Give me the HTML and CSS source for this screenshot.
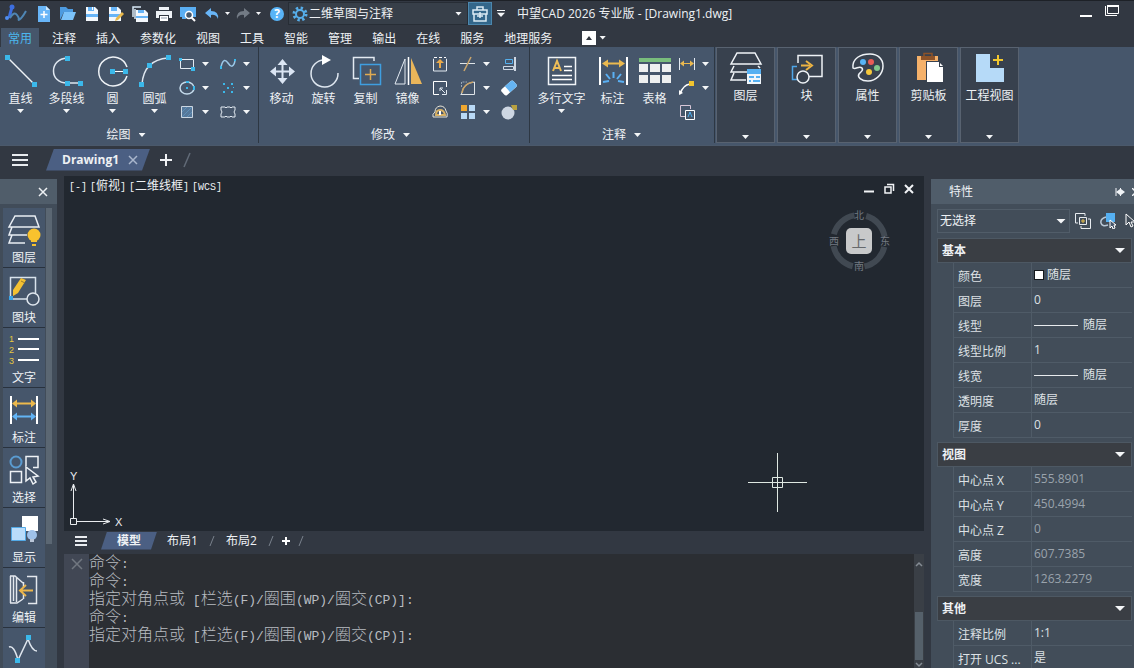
FILE: index.html
```html
<!DOCTYPE html>
<html lang="zh-CN">
<head>
    <meta charset="UTF-8">
    <meta name="viewport" content="width=device-width, initial-scale=1.0">
    <title>中望CAD 2026 专业版</title>
    <link rel="stylesheet" href="styles.css">
</head>
<body>
    <!-- 标题栏 -->
    <header class="titlebar">
        <svg class="logo" width="24" height="20" viewBox="0 0 24 20"><path d="M8 3L5 14" stroke="#3d6fe0" stroke-width="3" fill="none"/><circle cx="8" cy="3" r="2.5" fill="#3d6fe0"/><circle cx="3" cy="14" r="2" fill="#4f8df0"/><path d="M6 14q4-7 7-3t1 5q3 0 8-9" fill="none" stroke="#4f86b4" stroke-width="2"/></svg>
        <div class="quick">
            <button type="button" aria-label="新建"><svg width="16" height="16" viewBox="0 0 16 16"><path d="M2 0h8l4 4v12H2z" fill="#68b5f7"/><path d="M10 0v4h4z" fill="#cfe7fb"/><path d="M8 5v7M4.500 8.500h7" stroke="#fff" stroke-width="1.500"/></svg></button>
            <button type="button" aria-label="打开"><svg width="16" height="16" viewBox="0 0 16 16"><path d="M0 14V1h6l2 2h5v3H4z" fill="#4d9be0"/><path d="M4 6h12l-3 8H1z" fill="#7cc3fa"/></svg></button>
            <button type="button" aria-label="保存"><svg width="16" height="16" viewBox="0 0 16 16"><path d="M2 1h9l3 3v11H2z" fill="#f4f8fc"/><path d="M4 1h6v4H4zM2 8h12v3H2z" fill="#68b5f7"/><path d="M8 1h1v3H8z" fill="#fff"/></svg></button>
            <button type="button" aria-label="另存为"><svg width="16" height="16" viewBox="0 0 16 16"><path d="M1 1h9l3 3v11H1z" fill="#f4f8fc"/><path d="M3 1h6v4H3zM1 8h12v3H1z" fill="#68b5f7"/><path d="M14 6l2 2-6 6-3 1 1-3z" fill="#e8b84a"/></svg></button>
            <button type="button" aria-label="全部保存"><svg width="16" height="16" viewBox="0 0 16 16"><path d="M1 11V1h8M3 13V3" fill="none" stroke="#d8e8f6" stroke-width="1.500"/><path d="M4 4h9l3 3v9H4z" fill="#f4f8fc"/><path d="M6 4h6v3H6zM4 10h12v2H4z" fill="#68b5f7"/></svg></button>
            <button type="button" aria-label="打印"><svg width="16" height="16" viewBox="0 0 16 16"><path d="M3 1h10v3H3zM0 5h16v7h-3V9H3v3H0z" fill="#eef2f6"/><path d="M4 10h8v5H4z" fill="#fff"/><path d="M5 12h6" stroke="#8a97a8"/></svg></button>
            <button type="button" aria-label="打印预览"><svg width="16" height="16" viewBox="0 0 16 16"><path d="M0 1h16v10H0z" fill="#5aaef2"/><path d="M2 12h4" stroke="#5aaef2" stroke-width="2"/><circle cx="9" cy="9" r="3.500" fill="#46586b" stroke="#fff" stroke-width="1.500"/><path d="M11 11l4 4" stroke="#fff" stroke-width="2"/></svg></button>
            <button type="button" class="split" aria-label="撤销"><svg width="16" height="16" viewBox="0 0 16 16"><path d="M7 2L1 7l6 5V9q5-1 7 4 1-8-7-8z" fill="#68b5f7"/></svg><i class="caret tiny"></i></button>
            <button type="button" class="split dim" aria-label="重做"><svg width="16" height="16" viewBox="0 0 16 16"><path d="M9 2l6 5-6 5V9q-5-1-7 4-1-8 7-8z" fill="#737b85"/></svg><i class="caret tiny"></i></button>
            <button type="button" class="help" aria-label="帮助">?</button>
        </div>
        <label class="workspace">
            <svg width="16" height="16" viewBox="0 0 16 16"><circle cx="8" cy="8" r="6" fill="none" stroke="#56aeea" stroke-width="3" stroke-dasharray="2.300 2.400"/><circle cx="8" cy="8" r="4" fill="none" stroke="#56aeea" stroke-width="2"/></svg>
            <select aria-label="工作空间"><option>二维草图与注释</option></select>
            <i class="caret"></i>
        </label>
        <button type="button" class="toolbox" aria-label="工具箱"><svg width="16" height="16" viewBox="0 0 16 16"><path d="M1 4h14v4H1zM2 8v7h12V8M5 4V1h6v3" fill="none" stroke="#dcebf5" stroke-width="1.500"/><path d="M8 6v6M5 10h6" fill="none" stroke="#dcebf5" stroke-width="1.500"/></svg></button>
        <button type="button" class="custom" aria-label="自定义"><i class="caret"></i></button>
        <h1 class="app-title">中望CAD 2026 专业版 - [Drawing1.dwg]</h1>
        <div class="window-buttons">
            <button type="button" aria-label="最小化"><svg width="14" height="14" viewBox="0 0 14 14"><path d="M1 12h12" stroke="#fff" stroke-width="2"/></svg></button>
            <button type="button" aria-label="还原"><svg width="14" height="14" viewBox="0 0 14 14"><path d="M2.500 1.500h11v8h-11zM.500 2v9.500H12" fill="none" stroke="#fff"/><path d="M2 2h12" stroke="#fff" stroke-width="2"/></svg></button>
        </div>
    </header>

    <nav class="menu">
        <button type="button" class="active">常用</button>
        <button type="button">注释</button>
        <button type="button">插入</button>
        <button type="button">参数化</button>
        <button type="button">视图</button>
        <button type="button">工具</button>
        <button type="button">智能</button>
        <button type="button">管理</button>
        <button type="button">输出</button>
        <button type="button">在线</button>
        <button type="button">服务</button>
        <button type="button">地理服务</button>
        <button type="button" class="fold" aria-label="折叠功能区"><svg width="14" height="14" viewBox="0 0 14 14"><path d="M0 0h14v14H0z" fill="#fff"/><path d="M7 5l3 4H4z" fill="#30363f"/></svg><i class="caret"></i></button>
    </nav>

    <!-- 功能区 -->
    <section class="ribbon">
        <div class="group">
            <div class="group-body">
                <button type="button" class="tool"><svg width="34" height="34" viewBox="0 0 34 34"><path d="M4 4l26 26" stroke="#eef2f6" stroke-width="1.500"/><path d="M1 1h5v5H1zM28 28h5v5h-5z" fill="#3bb8ea"/></svg>直线<i class="caret"></i></button>
                <button type="button" class="tool wide"><svg width="34" height="34" viewBox="0 0 34 34"><path d="M17 4C-1 5-1 29 17 29h13" fill="none" stroke="#dfe7f0" stroke-width="1.500"/><path d="M15 2h5v5h-5zM15 27h5v5h-5zM28 27h5v5h-5z" fill="#3bb8ea"/></svg>多段线<i class="caret"></i></button>
                <button type="button" class="tool"><svg width="34" height="34" viewBox="0 0 34 34"><path d="M31 13A14.500 14.500 0 1 0 31 22" fill="none" stroke="#eef2f6" stroke-width="1.500"/><path d="M17 17.500h13" stroke="#fff"/><path d="M14 15h5v5h-5zM27 15h5v5h-5z" fill="#3bb8ea"/></svg>圆<i class="caret"></i></button>
                <button type="button" class="tool"><svg width="34" height="34" viewBox="0 0 34 34"><path d="M4 30Q6 6 30 4" fill="none" stroke="#dfe7f0" stroke-width="1.500"/><path d="M1 28h5v5H1zM9 9h5v5H9zM28 1h5v5h-5z" fill="#3bb8ea"/></svg>圆弧<i class="caret"></i></button>
                <div class="mini two">
                    <button type="button" aria-label="矩形"><svg width="18" height="18" viewBox="0 0 18 18"><path d="M2.500 4.500h13v9h-13z" fill="none" stroke="#e3eaf2"/><path d="M1 3h3v3H1zM13 12h4v4h-4z" fill="#3bb8ea"/></svg><i class="caret"></i></button>
                    <button type="button" aria-label="样条曲线"><svg width="18" height="18" viewBox="0 0 18 18"><path d="M2 12C4 3 7 5 9 8s5 6 7-2" fill="none" stroke="#9cc8e8" stroke-width="1.500"/><path d="M1 11h2v3H1zM15 4h2v2h-2z" fill="#3bb8ea"/></svg><i class="caret"></i></button>
                    <button type="button" aria-label="椭圆"><svg width="18" height="18" viewBox="0 0 18 18"><ellipse cx="9" cy="9" rx="7" ry="6" fill="none" stroke="#c5dced" stroke-width="1.500"/><path d="M8 2h3v2H8zM8 8h2v2H8zM15 7h2v4h-2z" fill="#3bb8ea"/></svg><i class="caret"></i></button>
                    <button type="button" aria-label="点"><svg width="18" height="18" viewBox="0 0 18 18"><path d="M4 4h2v2H4zM12 4h2v2h-2zM8 8h2v2H8zM4 12h2v2H4zM12 12h2v2h-2zM14 8h1v1h-1z" fill="#3bb8ea"/></svg><i class="caret"></i></button>
                    <button type="button" aria-label="填充"><svg width="18" height="18" viewBox="0 0 18 18"><path d="M3.500 3.500h11v11h-11z" fill="#56789a" stroke="#cbd6e2"/><path d="M4 9l5-5M4 14L14 4M9 14l5-5" stroke="#5f8fb8"/></svg><i class="caret"></i></button>
                    <button type="button" aria-label="修订云线"><svg width="18" height="18" viewBox="0 0 18 18"><path d="M3 4h3l1 1 1-1h3l1 1 1-1h3v3l-1 2 1 2v3h-3l-1-1-1 1H8l-1-1-1 1H2v-3l1-2-1-2V4z" fill="none" stroke="#e3eaf2" stroke-linejoin="round"/></svg><i class="caret"></i></button>
                </div>
            </div>
            <button type="button" class="group-title">绘图<i class="caret"></i></button>
        </div>

        <div class="group">
            <div class="group-body">
                <button type="button" class="tool"><svg width="34" height="34" viewBox="0 0 34 34"><path d="M17.500 8v19M8 17.500h19" stroke="#dbe5f3" stroke-width="2"/><path d="M17.500 5l5 6h-10zM17.500 30l5-6h-10zM5 17.500l6-5v10zM30 17.500l-6-5v10z" fill="#dbe5f3"/></svg>移动</button>
                <button type="button" class="tool"><svg width="34" height="34" viewBox="0 0 34 34"><path d="M17 6A13.500 13.500 0 1 0 31 19" fill="none" stroke="#dfe7f0" stroke-width="1.500"/><path d="M15 1l9 5-9 5z" fill="#fff"/></svg>旋转</button>
                <button type="button" class="tool"><svg width="34" height="34" viewBox="0 0 34 34"><path d="M25 7V3.500H4.500v21H10" fill="none" stroke="#e3eaf2" stroke-width="1.500"/><path d="M11.500 10.500h20v20h-20z" fill="none" stroke="#3f9ee0" stroke-width="1.500"/><path d="M21.500 15v11M16 20.500h11" stroke="#e0ab52" stroke-width="1.500"/></svg>复制</button>
                <button type="button" class="tool"><svg width="34" height="34" viewBox="0 0 34 34"><path d="M14 5v25H4z" fill="none" stroke="#e3eaf2"/><path d="M17.500 3v28" stroke="#fff" stroke-width="1.500"/><path d="M20 4l11 26H20z" fill="#e9b55a"/></svg>镜像</button>
                <div class="mini three">
                    <button type="button" aria-label="拉伸"><svg width="18" height="18" viewBox="0 0 18 18"><path d="M3 4H2.500v12h13V4H15" fill="none" stroke="#e3eaf2"/><path d="M3 2.500h12" stroke="#fff" stroke-dasharray="3 2"/><path d="M9 7v6" stroke="#e9a94a" stroke-width="2"/><path d="M9 4l4 4H5z" fill="#e9a94a"/></svg></button>
                    <button type="button" aria-label="修剪"><svg width="18" height="18" viewBox="0 0 18 18"><path d="M1 8.500h16" stroke="#dfe4e8" stroke-dasharray="7 1"/><path d="M12 2L5 16" stroke="#caa56c" stroke-width="1.500"/></svg><i class="caret"></i></button>
                    <button type="button" aria-label="对齐"><svg width="18" height="18" viewBox="0 0 18 18"><path d="M15 2v14" stroke="#cfd8e4" stroke-width="2"/><path d="M5.500 4.500h7v4h-7z" fill="none" stroke="#55b0ee"/><path d="M3.500 11.500h10v3h-10z" fill="none" stroke="#cfd8e4"/></svg></button>
                    <button type="button" aria-label="缩放"><svg width="18" height="18" viewBox="0 0 18 18"><path d="M15.500 8V2.500h-13v13H8" fill="none" stroke="#fff"/><path d="M9 9l5 5M9 12V9h3M15.500 11v4.500H11" fill="none" stroke="#e3eaf2"/></svg></button>
                    <button type="button" aria-label="圆角"><svg width="18" height="18" viewBox="0 0 18 18"><path d="M2.500 16V15Q4 4 15.500 3v12.500h-14" fill="none" stroke="#dfe4e8"/><path d="M3 14Q4 5 14 3" fill="none" stroke="#c9a368" stroke-width="1.500"/><path d="M2.500 8V3H8" fill="none" stroke="#9aa6b5" stroke-dasharray="2 1"/></svg><i class="caret"></i></button>
                    <button type="button" aria-label="删除"><svg width="18" height="18" viewBox="0 0 18 18"><g transform="rotate(-42 9 9)"><rect x="1" y="5" width="16" height="8" rx="2" fill="#fff"/><path d="M7 5h8q2 0 2 2v4q0 2-2 2H7z" fill="#65b4f2"/></g></svg></button>
                    <button type="button" aria-label="偏移"><svg width="18" height="18" viewBox="0 0 18 18"><path d="M2 14q-1-3 2-5 0-5 5-6 5 0 6 5 2 2 1 6z" fill="none" stroke="#e8e4d6"/><path d="M5 12q0-5 4-5t5 5z" fill="none" stroke="#d9b265" stroke-width="2"/><path d="M8 8h2v4H8z" fill="#fff"/></svg></button>
                    <button type="button" aria-label="阵列"><svg width="18" height="18" viewBox="0 0 18 18"><path d="M2 2h6v6H2z" fill="#f0a830"/><path d="M10 2h6v6h-6zM2 10h6v6H2zM10 10h6v6h-6z" fill="#b9d9f6"/></svg><i class="caret"></i></button>
                    <button type="button" aria-label="分解"><svg width="18" height="18" viewBox="0 0 18 18"><circle cx="8" cy="10" r="6.500" fill="#cdd6e2"/><path d="M11 2h6v5h-4z" fill="#b9a140"/></svg></button>
                </div>
            </div>
            <button type="button" class="group-title">修改<i class="caret"></i></button>
        </div>

        <div class="group last">
            <div class="group-body">
                <button type="button" class="tool widest"><svg width="34" height="34" viewBox="0 0 34 34"><path d="M3.500 3.500h27v27h-27z" fill="none" stroke="#f0f4f8" stroke-width="1.500"/><path d="M8 17l4-10 4 10M9 14h6" fill="none" stroke="#edbd58" stroke-width="2"/><path d="M19 12.500h8M19 16.500h8M7 21.500h20M7 25.500h20" stroke="#fff" stroke-width="1.500"/></svg>多行文字<i class="caret"></i></button>
                <button type="button" class="tool"><svg width="34" height="34" viewBox="0 0 34 34"><path d="M4 3v28M31 3v28" stroke="#fff" stroke-width="2"/><path d="M9 9.500h18" stroke="#ebb94f" stroke-width="2"/><path d="M6 9.500l6-4v8zM29 9.500l-6-4v8z" fill="#ebb94f"/><path d="M17.500 18v6M10 20l4 5M25 20l-4 5M7 28l6-1M28 28l-6-1" stroke="#5ab0f4" stroke-width="2"/></svg>标注</button>
                <button type="button" class="tool"><svg width="34" height="34" viewBox="0 0 34 34"><path d="M1 4h32v4H1z" fill="#79bd7c"/><path d="M1 10h9v8H1zM12 10h10v8H12zM24 10h9v8h-9zM1 21h9v8H1zM12 21h10v8H12zM24 21h9v8h-9z" fill="#eef0f0"/></svg>表格</button>
                <div class="mini one">
                    <button type="button" aria-label="线性标注"><svg width="18" height="18" viewBox="0 0 18 18"><path d="M1.500 3v12M16.500 3v12" stroke="#e3eaf2"/><path d="M4 8.500h10" stroke="#ebb94f"/><path d="M2 8.500l4-3v6zM16 8.500l-4-3v6z" fill="#ebb94f"/></svg><i class="caret"></i></button>
                    <button type="button" aria-label="引线"><svg width="18" height="18" viewBox="0 0 18 18"><path d="M2 15Q5 6 12 5" fill="none" stroke="#fff" stroke-width="1.500"/><path d="M1 16v-5l4 3z" fill="#fff"/><path d="M11 2h5v5h-5z" fill="#f2c42f"/></svg><i class="caret"></i></button>
                    <button type="button" aria-label="字段"><svg width="18" height="18" viewBox="0 0 18 18"><path d="M7 13.500H2.500v-11h10V6" fill="none" stroke="#d8c7d8"/><path d="M7.500 7.500h9v9h-9z" fill="none" stroke="#fff"/><path d="M10 14l2-5 2 5" fill="none" stroke="#4fb0f0"/></svg></button>
                </div>
            </div>
            <button type="button" class="group-title">注释<i class="caret"></i></button>
        </div>

        <div class="folded-groups">
            <button type="button" class="folded"><svg width="34" height="34" viewBox="0 0 34 34"><path d="M8 2h18l6 11H2zM5 15l-3 6h17M5 22l-3 7h15M29 15l2 2" fill="none" stroke="#f0f4f8" stroke-width="1.500"/><path d="M18 18h14v15H18z" fill="#f0f6fb"/><path d="M18 18h14v5H18zM20 25h5v2h-5zM27 25h4v2h-4zM20 29h2v2h-2zM24 29h7v2h-7z" fill="#55b0f2"/></svg>图层<i class="caret"></i></button>
            <button type="button" class="folded"><svg width="34" height="34" viewBox="0 0 34 34"><path d="M8 12V4.500h24v21H19" fill="none" stroke="#eef2f6" stroke-width="1.500"/><path d="M7 15.500H2.500v13H7" fill="none" stroke="#4ea6e8" stroke-width="1.500"/><circle cx="13" cy="26" r="6" fill="none" stroke="#eef2f6" stroke-width="1.500"/><path d="M11 14.500h9" stroke="#ecb343" stroke-width="2"/><path d="M16 10l6 4.500-6 4.500" fill="none" stroke="#ecb343" stroke-width="2"/></svg>块<i class="caret"></i></button>
            <button type="button" class="folded"><svg width="34" height="34" viewBox="0 0 34 34"><path d="M2 17C1 7 10 3 19 3c8 0 13 5 13 12 0 8-7 15-15 15-7 0-11-4-9-7s5-3 3-6c-3-3-6 2-9 0z" fill="none" stroke="#eef2f6" stroke-width="1.500"/><circle cx="12" cy="11" r="3" fill="#58b4f5"/><circle cx="20" cy="11" r="3" fill="#e85b56"/><circle cx="26" cy="17" r="3" fill="#7fc78b"/><circle cx="18" cy="21" r="3" fill="#f5c73b"/></svg>属性<i class="caret"></i></button>
            <button type="button" class="folded"><svg width="34" height="34" viewBox="0 0 34 34"><path d="M5 5h21v24H5z" fill="#f5b16a"/><path d="M9 5h14v4H9z" fill="#8d5329"/><path d="M12 2.500h8v4h-8z" fill="none" stroke="#8d5329" stroke-width="1.500"/><path d="M14 10h14l4 5v17H14z" fill="#38414e"/><path d="M15 11h12v5h4v15H15z" fill="#fff"/><path d="M28 12l3 3h-3z" fill="#fff"/></svg>剪贴板<i class="caret"></i></button>
            <button type="button" class="folded"><svg width="34" height="34" viewBox="0 0 34 34"><path d="M3 3h14v14h14v14H3z" fill="#b6daf8"/><path d="M25 4v10M20 9h10" stroke="#f2c72e" stroke-width="2"/></svg>工程视图<i class="caret"></i></button>
        </div>
    </section>

    <!-- 文档标签 -->
    <div class="doc-tabs">
        <button type="button" class="burger" aria-label="文档列表"><svg width="18" height="14" viewBox="0 0 18 14"><path d="M1 2h16M1 7h16M1 12h16" stroke="#e9ecf0" stroke-width="2"/></svg></button>
        <div class="doc-tab">
            <span>Drawing1</span>
            <button type="button" aria-label="关闭"><svg width="10" height="10" viewBox="0 0 10 10"><path d="M1 1l8 8M9 1L1 9" stroke="#a9b6cc" stroke-width="1.500"/></svg></button>
        </div>
        <button type="button" class="add" aria-label="新建图纸"><svg width="14" height="14" viewBox="0 0 14 14"><path d="M7 1v12M1 7h12" stroke="#f0f2f5" stroke-width="2"/></svg></button>
        <svg class="slash" width="8" height="16" viewBox="0 0 8 16"><path d="M7 1L1 15" stroke="#626b78" stroke-width="1.500"/></svg>
    </div>

    <main class="work">
        <aside class="palette">
            <div class="palette-head">
                <button type="button" aria-label="关闭工具栏"><svg width="10" height="10" viewBox="0 0 10 10"><path d="M1 1l8 8M9 1L1 9" stroke="#eef1f4" stroke-width="1.500"/></svg></button>
            </div>
            <div class="palette-body">
                <div class="palette-list">
                    <button type="button"><svg width="34" height="34" viewBox="0 0 34 34"><path d="M8 3h20l4 11H2zM5 14l-3 8h18M5 22l-3 8h16" fill="none" stroke="#e9eef4" stroke-width="1.500"/><circle cx="27" cy="22" r="6.500" fill="#f9c22e"/><path d="M24 28h6M25 32h4" stroke="#f9c22e" stroke-width="2"/></svg>图层</button>
                    <button type="button"><svg width="34" height="34" viewBox="0 0 34 34"><path d="M3.500 24V4.500h25V20M6 26h14" fill="none" stroke="#d8e2ec" stroke-width="1.500"/><path d="M2 23h4v4H2z" fill="#3ba6ea"/><circle cx="26" cy="26" r="6" fill="none" stroke="#dfe6ee" stroke-width="1.500"/><path d="M14 5l5 2-8 13-5 3v-6z" fill="#f4c132"/><path d="M14 8l4 2" stroke="#9a7a2c"/></svg>图块</button>
                    <button type="button"><svg width="34" height="34" viewBox="0 0 34 34"><path d="M11 6h21M11 16h21M11 27h21" stroke="#fff" stroke-width="2"/><g class="list-digits"><text x="2" y="9">1</text><text x="2" y="20">2</text><text x="2" y="31">3</text></g></svg>文字</button>
                    <button type="button"><svg width="34" height="34" viewBox="0 0 34 34"><path d="M4 3v28M30 3v28" stroke="#fff" stroke-width="2"/><path d="M8 10.500h18" stroke="#ecb94c" stroke-width="2"/><path d="M5 10.500l5-4v8zM29 10.500l-5-4v8z" fill="#ecb94c"/><path d="M8 23.500h18" stroke="#62b4f5" stroke-width="2"/><path d="M5 23.500l5-4v8zM29 23.500l-5-4v8z" fill="#62b4f5"/></svg>标注</button>
                    <button type="button"><svg width="34" height="34" viewBox="0 0 34 34"><circle cx="9" cy="9" r="5.500" fill="none" stroke="#5a9bd0" stroke-width="2"/><path d="M19 13V3.500h12v11h-5M3.500 18.500h11v11h-11z" fill="none" stroke="#eef2f6" stroke-width="1.500"/><path d="M19 14v14l4-3 3 6 3-2-3-5 5-1z" fill="#46566b" stroke="#eef2f6" stroke-width="1.500"/></svg>选择</button>
                    <button type="button"><svg width="34" height="34" viewBox="0 0 34 34"><path d="M15 3h16v15H15z" fill="#fff"/><path d="M4.500 14.500h14v13h-14z" fill="#b9dcfa" stroke="#52a9e6"/><circle cx="25" cy="22" r="5" fill="#9fc2ea"/><path d="M23 26h4v3h-4z" fill="#b9c6d8"/></svg>显示</button>
                    <button type="button"><svg width="34" height="34" viewBox="0 0 34 34"><path d="M3.500 3v27M6.500 3v25M9.500 4v25M3 3h5l8 7M3 30h7l6-4M16.500 9v5M16.500 21v5M20 3.500h9.500v27H21" fill="none" stroke="#e3e8ee" stroke-width="1.500"/><path d="M14 17.500h12M19 12l-6 5.500 6 5.500" fill="none" stroke="#eab54c" stroke-width="2"/></svg>编辑</button>
                    <button type="button" class="clip" aria-label="多段线编辑"><svg width="34" height="34" viewBox="0 0 34 34"><path d="M2 16q5-2 9 13L21 8q4 12 9 12" fill="none" stroke="#dfe6ee" stroke-width="1.500"/><path d="M19 4h5v5h-5zM8 27h5v5H8z" fill="#3bb8ea"/></svg></button>
                </div>
                <div class="palette-scroll"><div class="palette-thumb"></div></div>
            </div>
        </aside>

        <section class="center">
            <div class="canvas">
                <div class="view-label"><span>[-]</span> <span>[<b>俯视</b>]</span> <span>[<b>二维线框</b>]</span> <span>[WCS]</span></div>
                <div class="view-buttons">
                    <button type="button" aria-label="最小化视口"><svg width="12" height="12" viewBox="0 0 12 12"><path d="M1 8.500h10" stroke="#f2f4f6" stroke-width="2"/></svg></button>
                    <button type="button" aria-label="还原视口"><svg width="12" height="12" viewBox="0 0 12 12"><path d="M2 4h6v6H2zM4 1.500h6.500V8" fill="none" stroke="#f2f4f6" stroke-width="1.500"/></svg></button>
                    <button type="button" aria-label="关闭视口"><svg width="12" height="12" viewBox="0 0 12 12"><path d="M2 2l8 8M10 2l-8 8" stroke="#f2f4f6" stroke-width="2"/></svg></button>
                </div>
                <svg class="compass" width="72" height="72" viewBox="-4 -4 72 72">
                    <circle cx="32" cy="32" r="26" fill="none" stroke="#414952" stroke-width="6" stroke-dasharray="29 12" stroke-dashoffset="-6"/>
                    <rect x="19" y="19" width="26" height="26" rx="5" fill="#c8c9ca"/>
                    <text class="face" x="32" y="38">上</text>
                    <g class="winds"><text x="32" y="10">北</text><text x="32" y="61">南</text><text x="7" y="36">西</text><text x="58" y="36">东</text></g>
                </svg>
                <svg class="ucs" width="56" height="58" viewBox="0 0 56 58">
                    <path d="M5.500 47V14M9 50.500h32M2.500 47.500h6v6h-6zM3 20l2.500-7L8 20M35 48l7 2.500-7 2.500" fill="none" stroke="#e9ecef"/>
                    <g class="axis"><text x="2" y="9">Y</text><text x="47" y="55">X</text></g>
                </svg>
                <svg class="cross" width="60" height="60" viewBox="0 0 60 60"><path d="M0 29.500h59M29.500 0v59M24.500 24.500h10v10h-10z" fill="none" stroke="#dfe8e2"/></svg>
            </div>

            <div class="layout-tabs">
                <button type="button" class="burger" aria-label="布局列表"><svg width="12" height="12" viewBox="0 0 12 12"><path d="M0 2h12M0 6h12M0 10h12" stroke="#e9ecf0" stroke-width="2"/></svg></button>
                <button type="button" class="layout active">模型</button>
                <button type="button" class="layout">布局1</button>
                <svg width="6" height="12" viewBox="0 0 6 12"><path d="M5 1L1 11" stroke="#79818c"/></svg>
                <button type="button" class="layout">布局2</button>
                <svg width="6" height="12" viewBox="0 0 6 12"><path d="M5 1L1 11" stroke="#79818c"/></svg>
                <button type="button" class="add" aria-label="新建布局"><svg width="8" height="8" viewBox="0 0 8 8"><path d="M4 0v8M0 4h8" stroke="#fff" stroke-width="2"/></svg></button>
                <svg width="6" height="12" viewBox="0 0 6 12"><path d="M5 1L1 11" stroke="#79818c"/></svg>
            </div>

            <div class="command">
                <div class="command-side"><button type="button" aria-label="关闭命令行"><svg width="12" height="12" viewBox="0 0 12 12"><path d="M1 1l10 10M11 1L1 11" stroke="#717780" stroke-width="1.500"/></svg></button></div>
                <div class="command-log">
                    <p><b>命令</b>:</p>
                    <p><b>命令</b>:</p>
                    <p><b>指定对角点或</b> [<b>栏选</b>(F)/<b>圈围</b>(WP)/<b>圈交</b>(CP)]:</p>
                    <p><b>命令</b>:</p>
                    <p><b>指定对角点或</b> [<b>栏选</b>(F)/<b>圈围</b>(WP)/<b>圈交</b>(CP)]:</p>
                    <input type="text" aria-label="命令行">
                </div>
                <div class="command-scroll">
                    <svg width="8" height="6" viewBox="0 0 8 6"><path d="M1 5l3-3 3 3" fill="none" stroke="#858c94" stroke-width="1.500"/></svg>
                    <div class="command-thumb"></div>
                    <svg width="8" height="6" viewBox="0 0 8 6"><path d="M1 1l3 3 3-3" fill="none" stroke="#858c94" stroke-width="1.500"/></svg>
                </div>
            </div>
        </section>

        <!-- 特性面板 -->
        <aside class="props">
            <div class="props-head">
                <h2>特性</h2>
                <button type="button" aria-label="自动隐藏"><svg width="10" height="10" viewBox="0 0 10 10"><path d="M1 1v8M5.500 1v8" stroke="#f0f3f6"/><path d="M5 2v6L1 5zM6 2v6l4-3z" fill="#f0f3f6"/></svg></button>
                <button type="button" aria-label="关闭特性"><svg width="8" height="8" viewBox="0 0 8 8"><path d="M0 0l8 8M8 0L0 8" stroke="#f0f3f6" stroke-width="1.500"/></svg></button>
            </div>
            <div class="props-pick">
                <div class="pick-box"><select aria-label="选择对象"><option>无选择</option></select><i class="caret big"></i></div>
                <button type="button" aria-label="切换"><svg width="16" height="16" viewBox="0 0 16 16"><path d="M3 10H.500V.500H10V3" fill="none" stroke="#e8ecf0"/><path d="M4.500 4.500h7v7h-7zM13 6h2.500v9.500H6V13" fill="none" stroke="#e8ecf0"/><path d="M8 6v4M6 8h4" stroke="#e8c04c"/></svg></button>
                <button type="button" aria-label="选择"><svg width="16" height="16" viewBox="0 0 16 16"><path d="M6 0h9v9H6z" fill="#55b0f2"/><path d="M6 4q-6 2-5 6 1 4 7 2" fill="none" stroke="#b9c7d6" stroke-width="1.500"/><path d="M10 7v8l2-2 1 3 2-1-1-3h2z" fill="#46566b" stroke="#fff"/></svg></button>
                <button type="button" aria-label="快速选择"><svg width="16" height="16" viewBox="0 0 16 16"><path d="M1 1v11l3-3 2 5 2-1-2-4h4z" fill="none" stroke="#fff"/></svg></button>
            </div>

            <section class="props-group">
                <h3>基本<i class="caret big"></i></h3>
                <div class="row"><label for="p1">颜色</label><div class="value"><i class="swatch"></i><input id="p1" value="随层"></div></div>
                <div class="row"><label for="p2">图层</label><div class="value"><input id="p2" value="0"></div></div>
                <div class="row"><label for="p3">线型</label><div class="value"><i class="line"></i><input id="p3" value="随层"></div></div>
                <div class="row"><label for="p4">线型比例</label><div class="value"><input id="p4" value="1"></div></div>
                <div class="row"><label for="p5">线宽</label><div class="value"><i class="line"></i><input id="p5" value="随层"></div></div>
                <div class="row"><label for="p6">透明度</label><div class="value"><input id="p6" value="随层"></div></div>
                <div class="row"><label for="p7">厚度</label><div class="value"><input id="p7" value="0"></div></div>
            </section>
            <section class="props-group readonly">
                <h3>视图<i class="caret big"></i></h3>
                <div class="row"><label for="p8">中心点 X</label><div class="value"><input id="p8" value="555.8901" readonly></div></div>
                <div class="row"><label for="p9">中心点 Y</label><div class="value"><input id="p9" value="450.4994" readonly></div></div>
                <div class="row"><label for="p10">中心点 Z</label><div class="value"><input id="p10" value="0" readonly></div></div>
                <div class="row"><label for="p11">高度</label><div class="value"><input id="p11" value="607.7385" readonly></div></div>
                <div class="row"><label for="p12">宽度</label><div class="value"><input id="p12" value="1263.2279" readonly></div></div>
            </section>
            <section class="props-group">
                <h3>其他<i class="caret big"></i></h3>
                <div class="row"><label for="p13">注释比例</label><div class="value"><input id="p13" value="1:1"></div></div>
                <div class="row"><label for="p14">打开 UCS ...</label><div class="value"><input id="p14" value="是"></div></div>
            </section>
        </aside>
    </main>
</body>
</html>
```
FILE: styles.css
```css
* {
    box-sizing: border-box;
}
body {
    margin: 0;
    height: 100vh;
    overflow: hidden;
    display: flex;
    flex-direction: column;
    background: #323842;
    color: #eef1f4;
    font-family: "Open Sans", "Noto Sans CJK SC", sans-serif;
    font-size: 12px;
    line-height: 16px;
}
button, input, select {
    font: inherit;
    color: inherit;
    background: none;
    border: 0;
    margin: 0;
    padding: 0;
}
button {
    display: flex;
    align-items: center;
    justify-content: center;
    flex-shrink: 0;
    white-space: nowrap;
}
select {
    appearance: none;
    outline: 0;
}
svg {
    display: block;
    flex-shrink: 0;
}
h1, h2, h3, p {
    margin: 0;
    font-size: 12px;
    font-weight: normal;
}

/* 小三角 */
.caret {
    width: 7px;
    height: 4px;
    flex-shrink: 0;
    background: #f4f6f8;
    clip-path: polygon(0 0, 100% 0, 50% 100%);
}
.caret.tiny {
    width: 5px;
    height: 3px;
}
.caret.big {
    width: 10px;
    height: 5px;
}

/* 标题栏 */
.titlebar {
    display: flex;
    align-items: center;
    height: 28px;
    flex-shrink: 0;
    padding: 0 14px 2px 4px;
    border-top: 1px solid #1d2127;
}
.logo {
    margin-right: 8px;
}
.quick {
    display: flex;
    align-items: center;
    gap: 8px;
}
.split {
    gap: 5px;
    margin-right: -3px;
}
.help {
    width: 14px;
    height: 14px;
    margin-left: 4px;
    border-radius: 50%;
    background: #58b4f8;
    color: #fff;
    font-weight: bold;
}
.workspace {
    display: flex;
    align-items: center;
    width: 180px;
    height: 23px;
    margin-left: 4px;
    padding: 0 5px 0 3px;
    background: #373f49;
    border: 1px solid #272d35;
}
.workspace select {
    flex: 1;
    min-width: 0;
    margin-left: 1px;
}
.toolbox {
    width: 24px;
    height: 23px;
    background: #33678b;
    border: 1px solid #4c87ad;
}
.custom {
    width: 18px;
    height: 12px;
    margin-right: 7px;
}
.custom .caret {
    width: 8px;
    height: 7px;
    clip-path: polygon(0 0, 100% 0, 100% 15%, 0 15%, 0 40%, 100% 40%, 50% 100%, 0 40%);
}
.app-title {
    font-size: 12px;
}
.window-buttons {
    display: flex;
    gap: 12px;
    margin: 0 1px 5px auto;
}

/* 菜单 */
.menu {
    display: flex;
    gap: 6px;
    height: 19px;
    flex-shrink: 0;
    padding-left: 1px;
}
.menu button {
    padding: 2px 7px 0;
}
.menu .active {
    background: #46566b;
    color: #4cb6ee;
}
.menu .fold {
    gap: 3px;
    padding: 0;
    margin-left: 17px;
}

/* 功能区 */
.ribbon {
    display: flex;
    height: 99px;
    flex-shrink: 0;
    background: #46566b;
    border-bottom: 1px solid #4b596b;
}
.group {
    display: flex;
    flex-direction: column;
    justify-content: space-between;
    padding: 7px 6px 0 0;
    margin-bottom: 2px;
    border-right: 1px solid #2d3743;
}
.group + .group {
    padding-left: 2px;
    padding-right: 9px;
}
.group + .last {
    padding-right: 3px;
}
.group-body {
    display: flex;
    gap: 1px;
}
.tool {
    flex-direction: column;
    justify-content: flex-start;
    width: 41px;
    height: 62px;
}
.tool svg {
    margin-bottom: 3px;
}
.tool .caret {
    margin-top: 2px;
}
.tool.wide {
    width: 49px;
}
.tool.widest {
    width: 59px;
}
.mini {
    display: grid;
    gap: 6px 10px;
    align-content: start;
    justify-items: start;
    padding: 1px 2px 0;
}
.mini.two {
    grid-template-columns: 31px 31px;
}
.mini.three {
    grid-template-columns: 18px 31px 18px;
}
.mini.one {
    grid-template-columns: 31px;
}
.mini button {
    gap: 6px;
}
.group-title {
    gap: 8px;
    align-self: center;
}
.folded-groups {
    display: flex;
    gap: 2px;
    margin: 0 0 2px 1px;
}
.folded {
    flex-direction: column;
    justify-content: flex-start;
    width: 59px;
    padding: 3px 0 3px;
    background: #38414e;
    border: 1px solid #586270;
}
.folded svg {
    margin-bottom: 3px;
}
.folded .caret {
    margin-top: auto;
}

/* 文档标签 */
.doc-tabs {
    display: flex;
    align-items: center;
    height: 30px;
    flex-shrink: 0;
    padding: 0 0 3px 11px;
}
.doc-tab {
    display: flex;
    align-items: center;
    gap: 9px;
    height: 22px;
    margin: 0 9px 0 17px;
    padding: 0 12px 0 16px;
    background: #4b5f83;
    clip-path: polygon(8px 0, 100% 0, calc(100% - 8px) 100%, 0 100%);
    font-weight: bold;
}
.slash {
    margin-left: 10px;
}

.work {
    display: flex;
    flex: 1;
    min-height: 0;
}

/* 左侧工具栏 */
.palette {
    display: flex;
    flex-direction: column;
    width: 57px;
    flex-shrink: 0;
    margin-top: 3px;
    background: #414c59;
}
.palette-head {
    display: flex;
    justify-content: flex-end;
    height: 25px;
    flex-shrink: 0;
    padding-right: 9px;
    background: #505d6a;
}
.palette-body {
    display: flex;
    flex: 1;
    min-height: 0;
    gap: 1px;
    padding: 4px 5px 0 3px;
}
.palette-list {
    flex: 1;
    overflow: hidden;
}
.palette-list button {
    flex-direction: column;
    justify-content: flex-start;
    gap: 3px;
    width: 100%;
    height: 60px;
    padding-top: 5px;
    background: #46566b;
    border-bottom: 1px solid #29323e;
}
.palette-list .clip {
    padding-top: 3px;
}
.palette-scroll {
    width: 6px;
}
.palette-thumb {
    height: 73%;
    background: #5b6773;
}
.list-digits {
    fill: #e5c640;
    font-family: "Liberation Sans", sans-serif;
    font-size: 9px;
}

/* 绘图区 */
.center {
    display: flex;
    flex-direction: column;
    flex: 1;
    min-width: 0;
    margin: 0 7px;
}
.canvas {
    position: relative;
    flex: 1;
    min-height: 0;
    background: #222830;
}
.view-label {
    display: flex;
    align-items: baseline;
    gap: 3px;
    padding: 1px 5px;
    font-family: "Liberation Mono", monospace;
    font-size: 10px;
}
.view-label b {
    font-family: "Noto Sans CJK SC", sans-serif;
    font-size: 12px;
    font-weight: normal;
}
.view-buttons {
    position: absolute;
    top: 7px;
    right: 9px;
    display: flex;
    gap: 8px;
}
.compass {
    position: absolute;
    top: 29px;
    right: 29px;
    font-family: "Noto Sans CJK SC", sans-serif;
    text-anchor: middle;
}
.face {
    font-size: 15px;
    fill: #66696c;
}
.winds {
    font-size: 10px;
    fill: #737a82;
}
.ucs {
    position: absolute;
    left: 4px;
    bottom: 2px;
}
.axis {
    font-family: "Liberation Sans", sans-serif;
    font-size: 11px;
    fill: #e9ecef;
}
.cross {
    position: absolute;
    right: 116px;
    bottom: 18px;
}

.layout-tabs {
    display: flex;
    align-items: center;
    gap: 11px;
    height: 23px;
    flex-shrink: 0;
    padding: 0 0 4px 11px;
}
.layout {
    height: 18px;
}
.layout-tabs .add {
    margin: 0 -3px;
}
.layout.active {
    margin: 0 -1px 0 3px;
    padding: 0 16px;
    background: #4b5f83;
    clip-path: polygon(6px 0, 100% 0, calc(100% - 6px) 100%, 0 100%);
    font-weight: bold;
}

/* 命令行 */
.command {
    display: flex;
    height: 114px;
    flex-shrink: 0;
    background: #2b2e33;
}
.command-side {
    width: 25px;
    padding: 4px 7px;
    background: #414754;
}
.command-log {
    flex: 1;
    min-width: 0;
    color: #b8bcc1;
    font-family: "Liberation Mono", monospace;
}
.command-log p {
    height: 18px;
    font-size: 13px;
    line-height: 14px;
    white-space: nowrap;
}
.command-log b {
    font-family: "Noto Sans CJK SC", sans-serif;
    font-size: 16px;
    font-weight: 300;
}
.command-log input {
    width: 100%;
}
.command-scroll {
    display: flex;
    flex-direction: column;
    align-items: center;
    width: 10px;
    padding-top: 7px;
    background: #3a3f46;
}
.command-thumb {
    width: 8px;
    height: 48px;
    margin: auto 0 2px;
    background: #55606a;
}

/* 特性面板 */
.props {
    display: flex;
    flex-direction: column;
    gap: 4px;
    width: 203px;
    flex-shrink: 0;
    margin-top: 3px;
    overflow: hidden;
    background: #424d59;
}
.props-head {
    display: flex;
    align-items: center;
    height: 25px;
    flex-shrink: 0;
    gap: 7px;
    padding-left: 18px;
    background: #505d6a;
}
.props-head h2 {
    flex: 1;
}
.props-head button:last-child {
    margin-right: -6px;
}
.props-pick {
    display: flex;
    align-items: center;
    gap: 9px;
    height: 26px;
    flex-shrink: 0;
    padding-left: 6px;
}
.pick-box {
    display: flex;
    align-items: center;
    width: 133px;
    height: 24px;
    margin-right: -4px;
    flex-shrink: 0;
    padding: 0 3px 0 2px;
    border: 1px solid #515d69;
}
.pick-box select {
    flex: 1;
    min-width: 0;
}
.props-group {
    flex-shrink: 0;
    margin: 0 2px 0 6px;
}
.props-group h3 {
    display: flex;
    align-items: center;
    justify-content: space-between;
    height: 25px;
    padding: 0 6px 0 4px;
    background: #3a3e44;
    border: 1px solid #4d5863;
    font-weight: bold;
}
.row {
    display: grid;
    grid-template-columns: 77px 1fr;
    height: 25px;
    margin-left: 16px;
    color: #dde1e5;
    border-left: 1px solid #4f5b67;
    border-bottom: 1px solid #4f5b67;
}
.row label {
    padding: 6px 4px 0;
    white-space: nowrap;
}
.value {
    display: flex;
    align-items: center;
    padding: 0 2px;
    border-left: 1px solid #4f5b67;
}
.value input {
    flex: 1;
    min-width: 0;
}
.readonly input {
    color: #9aa3ac;
}
.swatch {
    width: 10px;
    height: 10px;
    margin-right: 3px;
    background: #fff;
    border: 1px solid #14181c;
}
.line {
    width: 44px;
    height: 1px;
    margin-right: 5px;
    background: #e8ebee;
}
```
